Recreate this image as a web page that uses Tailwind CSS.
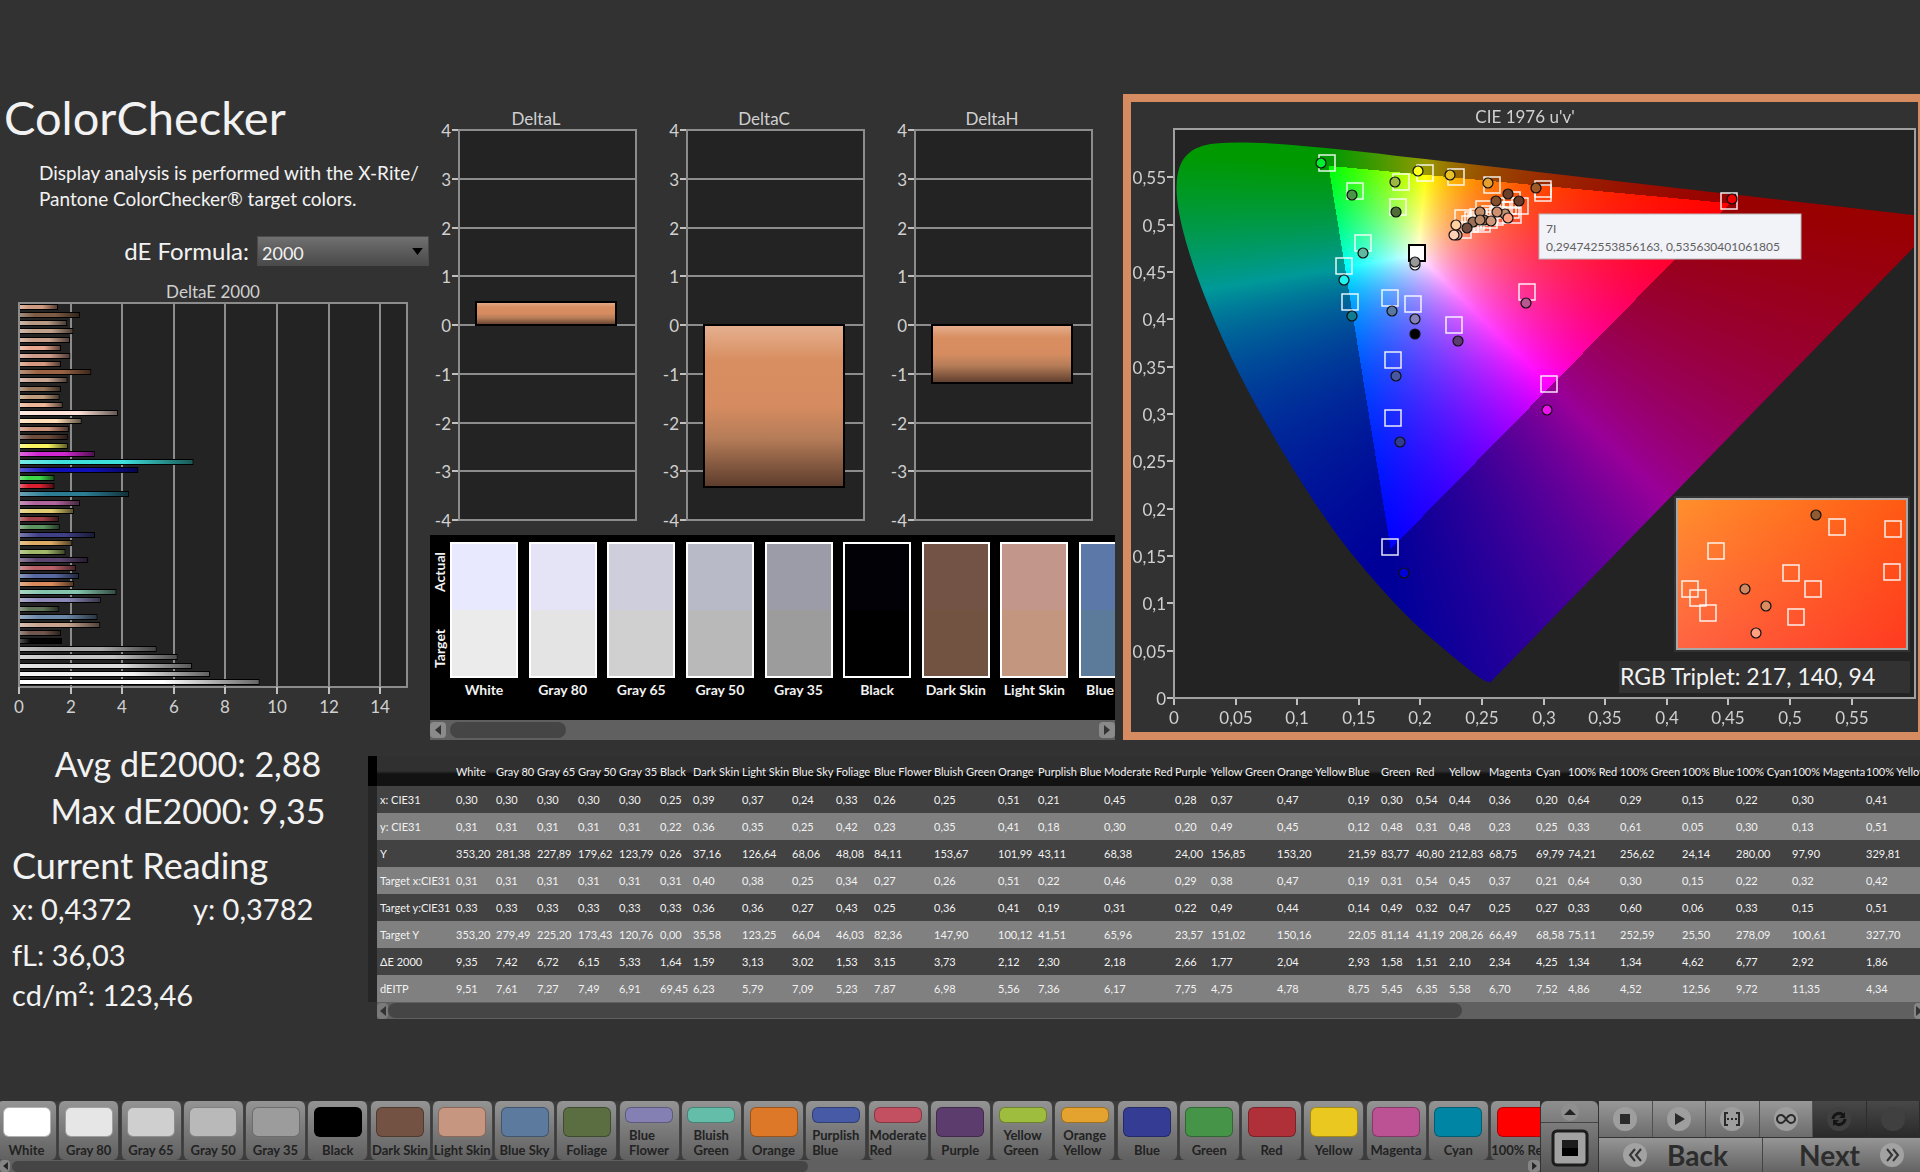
<!DOCTYPE html>
<html lang="en">
<head>
<meta charset="utf-8">
<meta name="viewport" content="width=device-width, initial-scale=1">
<title>ColorChecker</title>
<script src="https://cdn.jsdelivr.net/npm/@tailwindcss/browser@4"></script>
</head>
<body class="flex min-h-screen flex-col overflow-x-hidden bg-[#323232] font-['Lato',sans-serif] text-[#f2f2f2]">

<main class="pt-[90px]">
  <div class="grid grid-cols-[minmax(0,43fr)_minmax(0,69fr)_minmax(0,80fr)]">
    <!-- Summary and DeltaE chart -->
    <section>
      <h1 class="pl-1 text-[47px] leading-[54px]">ColorChecker</h1>
      <p class="mt-4 pl-[39px] text-[19px] leading-[26px] whitespace-nowrap">Display analysis is performed with the X-Rite/<br>Pantone ColorChecker® target colors.</p>
      <div class="mt-6 flex items-center justify-end gap-2">
        <label for="formula" class="text-2xl leading-[30px]">dE Formula:</label>
        <div class="relative mr-px w-[172px]">
          <select id="formula" class="block h-[30px] w-full appearance-none border border-[#4a4a4a] bg-linear-to-b from-[#707070] to-[#4a4a4a] pt-1 pl-1 text-lg leading-6 text-[#f2f2f2]"><option>2000</option></select>
          <svg class="pointer-events-none absolute top-3 right-1.5 h-[7px] w-[11px]" viewBox="0 0 12 8"><path d="M0 0h12L6 8z" fill="#000"/></svg>
        </div>
      </div>
      <svg id="deltaE" class="mt-2 block w-full" viewBox="0 274 430 446" font-size="17" fill="#d0d0d0" role="img" aria-label="DeltaE 2000"></svg>
    </section>

    <!-- Delta L, C, H charts and swatches -->
    <section>
      <svg id="deltas" class="block w-full" viewBox="430 90 690 445" font-size="17" fill="#d0d0d0" role="img" aria-label="DeltaL, DeltaC and DeltaH"></svg>
      <div class="mr-[5px]">
        <div class="flex h-[185px] overflow-hidden bg-black pt-[7px]">
          <div class="flex h-[136px] w-5 flex-none flex-col items-center justify-between py-2.5 text-sm leading-5 font-bold">
            <span class="rotate-180 [writing-mode:vertical-rl]">Actual</span>
            <span class="rotate-180 [writing-mode:vertical-rl]">Target</span>
          </div>
          <div id="swatches" class="flex w-[697px] flex-none justify-between"></div>
        </div>
        <div class="flex h-5 items-center justify-between bg-[#606060]">
          <button aria-label="Scroll left" class="flex h-4 w-4 items-center justify-center rounded bg-[#8a8a8a]"><svg class="h-2.5 w-1.5" viewBox="0 0 6 10"><path d="M6 0v10L0 5z" fill="#333"/></svg></button>
          <div class="ml-1 h-4 w-[116px] rounded-lg bg-[#454545]"></div>
          <div class="flex-1"></div>
          <button aria-label="Scroll right" class="flex h-4 w-4 items-center justify-center rounded bg-[#8a8a8a]"><svg class="h-2.5 w-1.5" viewBox="0 0 6 10"><path d="M0 0v10L6 5z" fill="#333"/></svg></button>
        </div>
      </div>
    </section>

    <!-- Chromaticity diagram -->
    <section>
      <svg id="cie" class="block w-full" viewBox="1120 90 800 652" font-size="17" fill="#d0d0d0" role="img" aria-label="CIE 1976 u'v'">
        <rect x="1127" y="98" width="795" height="638" fill="none" stroke="#d68c60" stroke-width="8"/>
        <rect x="1174" y="129" width="741" height="569" fill="#232323"/>
        <foreignObject x="1174" y="129" width="741" height="569"><canvas id="gamut" width="741" height="569" class="block"></canvas></foreignObject>
        <rect x="1174" y="129" width="741" height="569" fill="none" stroke="#a0a0a0" stroke-width="2"/>
      </svg>
    </section>
  </div>

  <div class="flex">
    <section class="-mt-0.5 w-[368px] flex-none">
      <div class="pl-2 text-center text-[34px] leading-[47px]">
        <p>Avg dE2000: 2,88</p>
        <p>Max dE2000: 9,35</p>
      </div>
      <h2 class="mt-2 pl-3 text-4xl leading-[47px]">Current Reading</h2>
      <div class="grid grid-cols-[181px_1fr] pl-3 text-[29px] leading-10 whitespace-nowrap">
        <p>x: 0,4372</p><p>y: 0,3782</p>
        <p class="col-span-2 mt-1.5">fL: 36,03</p>
        <p class="col-span-2">cd/m²: 123,46</p>
      </div>
    </section>
    <section class="min-w-0 flex-1 overflow-hidden pt-3.5">
      <table id="data" class="table-fixed border-collapse text-left text-[11px] leading-4 whitespace-nowrap"></table>
      <div class="ml-[9px] flex h-[17px] items-center bg-[#606060]">
        <button aria-label="Scroll table left" class="flex h-4 w-[11px] items-center justify-center rounded bg-[#7a7a7a]"><svg class="h-2.5 w-1.5" viewBox="0 0 6 10"><path d="M6 0v10L0 5z" fill="#333"/></svg></button>
        <div class="h-[15px] w-[1074px] rounded-lg bg-[#454545]"></div>
        <div class="flex-1"></div>
        <button aria-label="Scroll table right" class="-mr-1 flex h-4 w-[10px] items-center justify-center rounded-sm bg-[#858585]"><svg class="h-2.5 w-1.5" viewBox="0 0 6 10"><path d="M0 0v10L6 5z" fill="#333"/></svg></button>
      </div>
    </section>
  </div>
</main>

<footer class="mt-auto flex h-[71px] text-[#222]">
  <div class="flex min-w-0 flex-1 flex-col">
    <div class="h-[59px] overflow-hidden bg-[#3c3c3c]"><div id="patches" class="-ml-1 flex w-[1555px] justify-between"></div></div>
    <div class="flex h-3 items-center bg-[#606060]">
      <button aria-label="Scroll patches left" class="flex h-3 w-[10px] items-center justify-center rounded-sm bg-[#858585]"><svg class="h-2 w-[5px]" viewBox="0 0 6 10"><path d="M6 0v10L0 5z" fill="#222"/></svg></button>
      <div class="ml-0.5 h-[11px] w-[796px] rounded-md bg-[#454545]"></div>
      <div class="flex-1"></div>
      <button aria-label="Scroll patches right" class="flex h-3 w-3 items-center justify-center rounded-sm bg-[#858585]"><svg class="h-2 w-[5px]" viewBox="0 0 6 10"><path d="M0 0v10L6 5z" fill="#222"/></svg></button>
    </div>
  </div>
  <div class="flex w-[59px] flex-none flex-col border-x border-[#333]">
    <button aria-label="Expand" class="flex h-[22px] items-center justify-center rounded-t-md border-b border-[#444] bg-linear-to-b from-[#8e8e8e] to-[#7c7c7c]">
      <svg class="h-[18px] w-5" viewBox="0 0 20 18"><circle cx="10" cy="9" r="9" fill="#8f8f8f"/><path d="M4 12l6-6 6 6z" fill="#222"/></svg>
    </button>
    <button aria-label="Patch window" class="flex flex-1 items-center justify-center bg-linear-to-b from-[#7c7c7c] to-[#555]">
      <svg class="h-[38px] w-[38px]" viewBox="0 0 38 38"><rect x="2" y="2" width="34" height="34" rx="4" fill="#a2a2a2" stroke="#1c1c1c" stroke-width="3"/><rect x="11" y="11" width="16" height="16" fill="#000"/><rect x="11" y="11" width="16" height="8" fill="#1c1c1c"/></svg>
    </button>
  </div>
  <div class="grid w-[321px] flex-none grid-rows-[36px_35px]">
    <div id="controls" class="grid grid-cols-6"></div>
    <div class="grid grid-cols-[164px_1fr] border-t border-[#333] text-[28px] leading-8 font-bold text-[#2c2c2c]">
      <button class="flex items-center gap-5 border-r border-[#444] bg-linear-to-b from-[#969696] to-[#636363] pl-6">
        <svg class="h-6 w-6" viewBox="0 0 24 24"><circle cx="12" cy="12" r="12" fill="#a2a2a2"/><path d="M12 6l-5 6 5 6M18 6l-5 6 5 6" fill="none" stroke="#333" stroke-width="2"/></svg>Back</button>
      <button class="flex items-center justify-end gap-5 bg-linear-to-b from-[#969696] to-[#636363] pr-4">Next
        <svg class="h-6 w-6" viewBox="0 0 24 24"><circle cx="12" cy="12" r="12" fill="#a2a2a2"/><path d="M7 6l5 6-5 6M13 6l5 6-5 6" fill="none" stroke="#333" stroke-width="2"/></svg></button>
    </div>
  </div>
</footer>

<script>
const byId = id => document.getElementById(id);
const line = (x1, y1, x2, y2, c) => `<path d="M${x1} ${y1}L${x2} ${y2}" stroke="${c || '#8c8c8c'}" stroke-width="2"/>`;
const text = (x, y, s, a, extra) => `<text x="${x}" y="${y}" text-anchor="${a || 'middle'}" ${extra || ''}>${s}</text>`;
const num = n => String(+n.toFixed(2)).replace('.', ',');

/* DeltaE 2000: one bar per patch, top to bottom */
const bars = [[1.48,'#d09a80'],[2.34,'#7d5b44'],[1.84,'#b89a84'],[2.08,'#c0a08a'],[1.95,'#c9a08c'],[1.6,'#e8a890'],[1.96,'#cf9c8c'],[1.6,'#d49880'],[2.78,'#9a6444'],[1.85,'#c8a493'],[1.6,'#96755a'],[1.54,'#c09c7c'],[1.66,'#ecb498'],[3.82,'#ffe2d8'],[2.4,'#ffdcb8'],[1.9,'#c9907a'],[1.86,'#6e4c3c'],[1.86,'#f8f460'],[2.92,'#d028d0'],[6.77,'#3ee0dc'],[4.62,'#1010b8'],[1.34,'#3cd848'],[1.34,'#d82030'],[4.25,'#2c7c94'],[2.34,'#b0649c'],[2.1,'#e0cc70'],[1.51,'#a04048'],[1.55,'#5c9460'],[2.93,'#404088'],[2.04,'#dcac64'],[1.77,'#a0b868'],[2.66,'#5c4670'],[2.18,'#b86068'],[2.3,'#5868a0'],[2.1,'#d88c5c'],[3.76,'#84c4ac'],[3.15,'#8c88b8'],[1.53,'#607458'],[3.02,'#6c88a8'],[3.13,'#c8a490'],[1.6,'#70564c'],[1.64,'#040404'],[5.33,'#a8a8a8'],[6.15,'#c4c4c4'],[6.72,'#dcdcdc'],[7.42,'#f0f0f0'],[9.35,'#ffffff']];
let s = `<defs><linearGradient id="sheen"><stop stop-color="#fff" stop-opacity=".3"/><stop offset=".25" stop-color="#fff" stop-opacity="0"/><stop offset=".6" stop-opacity="0"/><stop offset="1" stop-opacity=".6"/></linearGradient></defs>`;
s += text(213, 298, 'DeltaE 2000') + `<rect x="19" y="303" width="388" height="384" fill="#232323" stroke="#8c8c8c" stroke-width="2"/>`;
for (let v = 0; v <= 14; v += 2) {
  const x = Math.round(19 + v * 25.8);
  s += line(x, 303, x, 687) + line(x, 687, x, 694, '#c0c0c0') + text(x, 713, v);
}
bars.forEach(([v, c], i) => {
  const y = Math.round(304 + i * 8.15), w = v * 25.6;
  s += `<path d="M20 ${y}h${w}v6h${-w}z" fill="#000"/><path d="M20 ${y + 1}h${w - 1}v4h${1 - w}z" fill="${c}"/><path d="M20 ${y + 1}h${w - 1}v4h${1 - w}z" fill="url(#sheen)"/>`;
});
byId('deltaE').innerHTML = s;

/* DeltaL / DeltaC / DeltaH */
s = `<defs><linearGradient id="skin" x2="0" y2="1"><stop stop-color="#e5b090"/><stop offset=".22" stop-color="#d88e60"/><stop offset=".5" stop-color="#d68c60"/><stop offset=".7" stop-color="#b57c58"/><stop offset="1" stop-color="#5c3c2c"/></linearGradient></defs>`;
[['DeltaL', 459, 302, 325], ['DeltaC', 687, 325, 487], ['DeltaH', 915, 325, 383]].forEach(([name, x, top, bottom]) => {
  s += text(x + 77, 125, name) + `<rect x="${x}" y="130" width="177" height="390" fill="#232323"/>`;
  for (let v = 4; v >= -4; v--) {
    const y = Math.round(325 - v * 48.75);
    s += line(x, y, x + 177, y) + line(x - 7, y, x, y, '#c0c0c0') + text(x - 8, y + 7, v, 'end');
  }
  s += `<rect x="${x}" y="130" width="177" height="390" fill="none" stroke="#8c8c8c" stroke-width="2"/><rect x="${x + 17}" y="${top}" width="140" height="${bottom - top}" fill="url(#skin)" stroke="#000" stroke-width="2"/>`;
});
byId('deltas').innerHTML = s;

/* Actual / target swatches */
byId('swatches').innerHTML = [['White','#e8e8ff','#ebebeb'],['Gray 80','#e4e4f6','#e4e4e4'],['Gray 65','#cecedd','#d0d0d0'],['Gray 50','#b8bac8','#b9b9b9'],['Gray 35','#9c9ca8','#9c9c9c'],['Black','#020206','#000000'],['Dark Skin','#735346','#725240'],['Light Skin','#c2968a','#c2967f'],['Blue Sky','#5c78a8','#5c7a9a']]
  .map(([n, a, t]) => `<figure class="w-[68px] flex-none"><div class="flex h-[136px] flex-col border-2 border-white"><div class="flex-1" style="background:${a}"></div><div class="flex-1" style="background:${t}"></div></div><figcaption class="-mx-2 mt-0.5 text-center text-sm leading-5 font-bold whitespace-nowrap">${n}</figcaption></figure>`).join('');

/* Chromaticity fill: u'v' to linear RGB, dimmed outside the Rec. 709 triangle */
const locus = [[.1741,.005],[.1714,.0051],[.1644,.0109],[.1566,.0177],[.144,.0297],[.1241,.0578],[.1096,.0868],[.0913,.1327],[.0687,.2007],[.0454,.295],[.0235,.4127],[.0082,.5384],[.0039,.6548],[.0139,.7502],[.0389,.812],[.0743,.8338],[.1142,.8262],[.1547,.8059],[.1929,.7816],[.2296,.7543],[.3016,.6923],[.3731,.6245],[.4441,.5547],[.5125,.4866],[.5752,.4242],[.627,.3725],[.6915,.3083],[.7347,.2653]];
const ctx = byId('gamut').getContext('2d'), W = 741, H = 569, img = ctx.createImageData(W, H);
for (let j = 0; j < H; j++) for (let i = 0; i < W; i++) {
  const u = i / 1232, v = (H - j) / 947, d = 6 * u - 16 * v + 12, x = 9 * u / d, y = 4 * v / d, z = 1 - x - y;
  const rgb = [3.2406 * x - 1.5372 * y - .4986 * z, -.9689 * x + 1.8758 * y + .0415 * z, .0557 * x - .204 * y + 1.057 * z];
  const k = (Math.min(...rgb) < 0 ? 153 : 255) / Math.max(...rgb), o = 4 * (j * W + i);
  for (let c = 0; c < 3; c++) img.data[o + c] = Math.max(0, rgb[c] * k);
  img.data[o + 3] = 255;
}
ctx.putImageData(img, 0, 0);
ctx.globalCompositeOperation = 'destination-in';
ctx.beginPath();
const pts = locus.map(([x, y]) => { const d = -2 * x + 12 * y + 3; return [4 * x / d * 1232, H - 9 * y / d * 947]; });
ctx.moveTo(...pts[0]);
for (let i = 1; i < pts.length - 1; i++) ctx.quadraticCurveTo(...pts[i], (pts[i][0] + pts[i + 1][0]) / 2, (pts[i][1] + pts[i + 1][1]) / 2);
ctx.lineTo(...pts[pts.length - 1]);
ctx.fill();

/* Chromaticity axes and markers */
const square = ([x, y]) => `<rect x="${x - 8}" y="${y - 8}" width="16" height="16" fill="none" stroke="#fff" stroke-opacity=".9" stroke-width="1.5"/>`;
const dot = ([x, y, c]) => `<circle cx="${x}" cy="${y}" r="5" fill="${c}" stroke="#101010" stroke-width="1.2"/>`;
s = text(1525, 123, "CIE 1976 u'v'");
for (let i = 0; i < 12; i++) {
  const x = Math.round(1174 + i * 61.6), y = Math.round(698 - i * 47.35);
  s += line(x, 699, x, 705, '#c0c0c0') + text(x, 724, num(i * .05)) + line(1167, y, 1173, y, '#c0c0c0') + text(1166, y + 7, num(i * .05), 'end');
}
s += [[1327,163],[1355,191],[1398,207],[1401,182],[1425,173],[1456,177],[1492,185],[1363,243],[1344,266],[1350,302],[1390,298],[1413,304],[1454,325],[1393,360],[1527,292],[1463,218],[1484,209],[1478,217],[1476,222],[1473,220],[1463,230],[1470,224],[1482,224],[1490,214],[1495,217],[1498,215],[1502,210],[1512,200],[1520,206],[1508,206],[1513,215],[1511,210],[1489,220],[1543,189],[1543,193],[1729,201],[1549,384],[1393,418],[1390,547]].map(square).join('');
s += `<rect x="1409" y="245" width="16" height="16" fill="#fff" stroke="#000" stroke-width="2"/>`;
s += [[1321,163,'#00f030'],[1352,195,'#4a9448'],[1395,182,'#9cb840'],[1418,171,'#ffff20'],[1450,175,'#e8c028'],[1488,183,'#e4a030'],[1396,212,'#506c38'],[1496,201,'#84502c'],[1508,194,'#6c4028'],[1519,201,'#6a3c28'],[1536,188,'#a05a28'],[1505,214,'#c09070'],[1497,212,'#d09070'],[1508,218,'#ffa080'],[1484,220,'#a07050'],[1491,221,'#d09878'],[1480,212,'#c08c68'],[1473,222,'#9a7058'],[1480,220,'#b88868'],[1467,228,'#704c40'],[1457,235,'#d0a090'],[1454,235,'#ffd0b8'],[1456,225,'#ffd0a0'],[1363,253,'#60b8a0'],[1344,280,'#20f4f0'],[1352,316,'#107c90'],[1392,311,'#5878a0'],[1415,265,'#ffffff'],[1415,262,'#989898'],[1415,319,'#8480b8'],[1415,334,'#000'],[1458,341,'#5c3c70'],[1396,376,'#4858a0'],[1526,303,'#b85890'],[1732,199,'#f00000'],[1547,410,'#f010f0'],[1400,442,'#303c90'],[1404,573,'#0000d8']].map(dot).join('');
/* Magnified inset */
s += `<defs><linearGradient id="ia" x2="1" y2="0"><stop stop-color="#ff902c"/><stop offset="1" stop-color="#ff5a14"/></linearGradient><linearGradient id="ib" x2="1" y2="0"><stop stop-color="#ff6444"/><stop offset="1" stop-color="#ff3a20"/></linearGradient><linearGradient id="im" x2="0" y2="1"><stop stop-color="#000"/><stop offset="1" stop-color="#fff"/></linearGradient><mask id="fade" maskContentUnits="objectBoundingBox"><rect width="1" height="1" fill="url(#im)"/></mask></defs>
<rect x="1674" y="496" width="236" height="156" fill="#323232"/><rect x="1677" y="499" width="230" height="150" fill="url(#ia)"/><rect x="1677" y="499" width="230" height="150" fill="url(#ib)" mask="url(#fade)"/><rect x="1677" y="499" width="230" height="150" fill="none" stroke="#a8a8a8" stroke-width="2"/>`;
s += [[1716,551],[1837,527],[1893,529],[1690,589],[1698,598],[1708,613],[1791,573],[1813,589],[1796,617],[1892,572]].map(square).join('');
s += [[1816,515,'#905c34'],[1745,589,'#d08860'],[1766,606,'#d88c60'],[1756,633,'#ffa080']].map(dot).join('');
s += `<rect x="1619" y="661" width="291" height="32" fill="#323232"/>` + text(1620, 685, 'RGB Triplet: 217, 140, 94', 'start', 'font-size="23" fill="#f2f2f2"');
s += `<rect x="1539" y="214" width="262" height="45" fill="#f2f3f8" stroke="#b8b8b8"/>` + text(1546, 233, '7I', 'start', 'font-size="12" fill="#606060"') + text(1546, 251, '0,294742553856163, 0,535630401061805', 'start', 'font-size="12" fill="#606060"');
byId('cie').insertAdjacentHTML('beforeend', s);

/* Readings table */
const cols = [['',76],['White',40],['Gray 80',41],['Gray 65',41],['Gray 50',41],['Gray 35',41],['Black',33],['Dark Skin',49],['Light Skin',50],['Blue Sky',44],['Foliage',38],['Blue Flower',60],['Bluish Green',64],['Orange',40],['Purplish Blue',66],['Moderate Red',71],['Purple',36],['Yellow Green',66],['Orange Yellow',71],['Blue',33],['Green',35],['Red',33],['Yellow',40],['Magenta',47],['Cyan',32],['100% Red',52],['100% Green',62],['100% Blue',54],['100% Cyan',56],['100% Magenta',74],['100% Yellow',66]];
const rows = `x: CIE31|0,30 0,30 0,30 0,30 0,30 0,25 0,39 0,37 0,24 0,33 0,26 0,25 0,51 0,21 0,45 0,28 0,37 0,47 0,19 0,30 0,54 0,44 0,36 0,20 0,64 0,29 0,15 0,22 0,30 0,41
y: CIE31|0,31 0,31 0,31 0,31 0,31 0,22 0,36 0,35 0,25 0,42 0,23 0,35 0,41 0,18 0,30 0,20 0,49 0,45 0,12 0,48 0,31 0,48 0,23 0,25 0,33 0,61 0,05 0,30 0,13 0,51
Y|353,20 281,38 227,89 179,62 123,79 0,26 37,16 126,64 68,06 48,08 84,11 153,67 101,99 43,11 68,38 24,00 156,85 153,20 21,59 83,77 40,80 212,83 68,75 69,79 74,21 256,62 24,14 280,00 97,90 329,81
Target x:CIE31|0,31 0,31 0,31 0,31 0,31 0,31 0,40 0,38 0,25 0,34 0,27 0,26 0,51 0,22 0,46 0,29 0,38 0,47 0,19 0,31 0,54 0,45 0,37 0,21 0,64 0,30 0,15 0,22 0,32 0,42
Target y:CIE31|0,33 0,33 0,33 0,33 0,33 0,33 0,36 0,36 0,27 0,43 0,25 0,36 0,41 0,19 0,31 0,22 0,49 0,44 0,14 0,49 0,32 0,47 0,25 0,27 0,33 0,60 0,06 0,33 0,15 0,51
Target Y|353,20 279,49 225,20 173,43 120,76 0,00 35,58 123,25 66,04 46,03 82,36 147,90 100,12 41,51 65,96 23,57 151,02 150,16 22,05 81,14 41,19 208,26 66,49 68,58 75,11 252,59 25,50 278,09 100,61 327,70
ΔE 2000|9,35 7,42 6,72 6,15 5,33 1,64 1,59 3,13 3,02 1,53 3,15 3,73 2,12 2,30 2,18 2,66 1,77 2,04 2,93 1,58 1,51 2,10 2,34 4,25 1,34 1,34 4,62 6,77 2,92 1,86
dEITP|9,51 7,61 7,27 7,49 6,91 69,45 6,23 5,79 7,09 5,23 7,87 6,98 5,56 7,36 6,17 7,75 4,75 4,78 8,75 5,45 6,35 5,58 6,70 7,52 4,86 4,52 12,56 9,72 11,35 4,34`.split('\n');
const total = cols.reduce((a, c) => a + c[1], 9);
byId('data').style.width = total + 'px';
byId('data').innerHTML = `<colgroup><col style="width:9px">${cols.map(c => `<col style="width:${c[1]}px">`).join('')}</colgroup>
<thead><tr class="h-[30px] bg-linear-to-b from-[#303030] from-50% to-[#121212] to-60%"><td class="bg-black"></td>${cols.map(c => `<th scope="col" class="pt-0.5 pl-[3px] font-normal">${c[0]}</th>`).join('')}</tr></thead>
<tbody>${rows.map(r => { const [h, v] = r.split('|'); return `<tr class="h-[27px] odd:bg-[#424242] even:bg-[#808080]"><td class="bg-[#262626]"></td><th scope="row" class="pl-[3px] font-normal">${h}</th>${v.split(' ').map(n => `<td class="pl-[3px]">${n}</td>`).join('')}</tr>`; }).join('')}</tbody>`;

/* Patch buttons */
byId('patches').innerHTML = [['White','#ffffff'],['Gray 80','#e6e6e6'],['Gray 65','#cfcfcf'],['Gray 50','#b9b9b9'],['Gray 35','#9c9c9c'],['Black','#000000'],['Dark Skin','#735244'],['Light Skin','#c69680'],['Blue Sky','#5c7a9e'],['Foliage','#5a6e42'],['Blue<br>Flower','#8480b4'],['Bluish<br>Green','#64bda8'],['Orange','#dc7828'],['Purplish<br>Blue','#465aa6'],['Moderate<br>Red','#c25060'],['Purple','#5c3c6c'],['Yellow<br>Green','#9ebc3e'],['Orange<br>Yellow','#e4a22e'],['Blue','#343c94'],['Green','#469448'],['Red','#b0303a'],['Yellow','#eac820'],['Magenta','#bc5294'],['Cyan','#0086a4'],['100% Red','#ff0000']]
  .map(([n, c]) => `<button class="flex h-[59px] w-[61px] flex-none flex-col items-center justify-between rounded-md border-x border-[#444] bg-linear-to-b from-[#949494] to-[#606060] pt-1.5 pb-0.5"><span class="w-12 rounded-md border border-black/30 ${n.includes('<br>') ? 'h-4' : 'h-[30px]'}" style="background:${c}"></span><span class="text-left text-[13px] leading-[15px] font-bold whitespace-nowrap">${n}</span></button>`).join('');

/* Playback controls */
byId('controls').innerHTML = [['Stop','<path d="M7 7h10v10H7z"/>'],['Play','<path d="M8 6l10 6-10 6z"/>'],['Read range','<path d="M8 6H5v12h3M16 6h3v12h-3" fill="none" stroke="#2a2a2a" stroke-width="2"/><path d="M7 11h2v2H7zM11 11h2v2h-2zM15 11h2v2h-2z"/>'],['Continuous','<path d="M12 12c-2-3-3-4-5-4a4 4 0 0 0 0 8c2 0 3-1 5-4s3-4 5-4a4 4 0 0 1 0 8c-2 0-3-1-5-4z" fill="none" stroke="#2a2a2a" stroke-width="2"/>'],['Refresh','<path d="M6 12a6 6 0 0 1 10-4M18 12a6 6 0 0 1-10 4" fill="none" stroke="#151515" stroke-width="3"/><path d="M18 5v6h-6zM6 19v-6h6z" fill="#151515"/>'],['Record','']]
  .map(([n, p], i) => `<button aria-label="${n}" class="flex items-center justify-center border-r ${i < 4 ? 'border-[#505050] bg-linear-to-b from-[#989898] to-[#6c6c6c]' : 'border-[#2c2c2c] bg-linear-to-b from-[#484848] to-[#2a2a2a]'}"><svg class="h-6 w-6" viewBox="0 0 24 24" fill="#2a2a2a"><circle cx="12" cy="12" r="12" fill="${i < 4 ? '#9e9e9e' : '#404040'}"/>${p}</svg></button>`).join('');
</script>
</body>
</html>
